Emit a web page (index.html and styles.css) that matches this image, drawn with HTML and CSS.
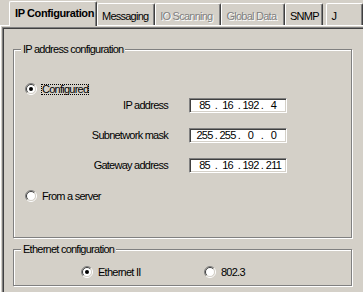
FILE: index.html
```html
<!DOCTYPE html>
<html>
<head>
    <title>IP Configuration</title>
    <meta charset="UTF-8">
    <link rel="stylesheet" href="styles.css">
</head>
<body>
    <!-- Tab strip -->
    <div class="tabs">
        <div class="tab tab-active">IP Configuration</div>
        <div class="tab tab-msg">Messaging</div>
        <div class="tab tab-io disabled">IO Scanning</div>
        <div class="tab tab-gd disabled">Global Data</div>
        <div class="tab tab-snmp">SNMP</div>
        <div class="tab tab-more">J</div>
    </div>

    <!-- Tab page -->
    <div class="page">
        <div class="frame">
            <div class="group group-ip">
                <span class="legend">IP address configuration</span>
                <div class="radio-row first-row">
                    <svg class="radio" viewBox="0 0 12 12">
                        <circle cx="6" cy="6" r="4.5" fill="#fff"/>
                        <path d="M2.1 9.9A5.5 5.5 0 0 1 9.9 2.1" fill="none" stroke="#808080"/>
                        <path d="M9.9 2.1A5.5 5.5 0 0 1 2.1 9.9" fill="none" stroke="#fff"/>
                        <path d="M2.8 9.2A4.5 4.5 0 0 1 9.2 2.8" fill="none" stroke="#404040"/>
                        <path d="M9.2 2.8A4.5 4.5 0 0 1 2.8 9.2" fill="none" stroke="#d4d0c8"/>
                        <circle cx="6" cy="6" r="2" fill="#000"/>
                    </svg>
                    <span class="radio-label focused">Configured</span>
                </div>
                <div class="fields">
                    <label class="field-label">IP address</label>
                    <div class="ip-box">
                        <span class="seg">85</span><span class="dot">.</span><span class="seg">16</span><span class="dot">.</span><span class="seg">192</span><span class="dot">.</span><span class="seg">4</span>
                    </div>
                    <label class="field-label">Subnetwork mask</label>
                    <div class="ip-box">
                        <span class="seg">255</span><span class="dot">.</span><span class="seg">255</span><span class="dot">.</span><span class="seg">0</span><span class="dot">.</span><span class="seg">0</span>
                    </div>
                    <label class="field-label">Gateway address</label>
                    <div class="ip-box">
                        <span class="seg">85</span><span class="dot">.</span><span class="seg">16</span><span class="dot">.</span><span class="seg">192</span><span class="dot">.</span><span class="seg">211</span>
                    </div>
                </div>
                <div class="radio-row server-row">
                    <svg class="radio" viewBox="0 0 12 12">
                        <circle cx="6" cy="6" r="4.5" fill="#fff"/>
                        <path d="M2.1 9.9A5.5 5.5 0 0 1 9.9 2.1" fill="none" stroke="#808080"/>
                        <path d="M9.9 2.1A5.5 5.5 0 0 1 2.1 9.9" fill="none" stroke="#fff"/>
                        <path d="M2.8 9.2A4.5 4.5 0 0 1 9.2 2.8" fill="none" stroke="#404040"/>
                        <path d="M9.2 2.8A4.5 4.5 0 0 1 2.8 9.2" fill="none" stroke="#d4d0c8"/>
                    </svg>
                    <span class="radio-label">From a server</span>
                </div>
            </div>

            <div class="group group-eth">
                <span class="legend">Ethernet configuration</span>
                <div class="eth-options">
                    <div class="radio-row opt-eth2">
                        <svg class="radio" viewBox="0 0 12 12">
                            <circle cx="6" cy="6" r="4.5" fill="#fff"/>
                            <path d="M2.1 9.9A5.5 5.5 0 0 1 9.9 2.1" fill="none" stroke="#808080"/>
                            <path d="M9.9 2.1A5.5 5.5 0 0 1 2.1 9.9" fill="none" stroke="#fff"/>
                            <path d="M2.8 9.2A4.5 4.5 0 0 1 9.2 2.8" fill="none" stroke="#404040"/>
                            <path d="M9.2 2.8A4.5 4.5 0 0 1 2.8 9.2" fill="none" stroke="#d4d0c8"/>
                            <circle cx="6" cy="6" r="2" fill="#000"/>
                        </svg>
                        <span class="radio-label">Ethernet II</span>
                    </div>
                    <div class="radio-row">
                        <svg class="radio" viewBox="0 0 12 12">
                            <circle cx="6" cy="6" r="4.5" fill="#fff"/>
                            <path d="M2.1 9.9A5.5 5.5 0 0 1 9.9 2.1" fill="none" stroke="#808080"/>
                            <path d="M9.9 2.1A5.5 5.5 0 0 1 2.1 9.9" fill="none" stroke="#fff"/>
                            <path d="M2.8 9.2A4.5 4.5 0 0 1 9.2 2.8" fill="none" stroke="#404040"/>
                            <path d="M9.2 2.8A4.5 4.5 0 0 1 2.8 9.2" fill="none" stroke="#d4d0c8"/>
                        </svg>
                        <span class="radio-label">802.3</span>
                    </div>
                </div>
            </div>
        </div>
    </div>
</body>
</html>
```

FILE: styles.css
```css
body {
    margin: 0;
    width: 363px;
    height: 292px;
    overflow: hidden;
    background: #d4d0c8;
    color: #000;
    font-family: "Liberation Sans", Arial, sans-serif;
    font-size: 11px;
    line-height: 13px;
    letter-spacing: -0.75px;
}
/* Tab strip */
.tabs {
    display: flex;
    align-items: flex-end;
    height: 25px;
    padding-left: 9px;
}
.tab {
    box-sizing: border-box;
    height: 22px;
    padding: 6px 0 0 4px;
    border-top: 1px solid #fff;
    border-left: 1px solid #fff;
    border-right: 1px solid #404040;
    border-radius: 2px 2px 0 0;
    box-shadow: inset -1px 0 #808080;
    white-space: nowrap;
    overflow: hidden;
}
.tab-active {
    position: relative;
    z-index: 1;
    width: 97px;
    height: 25px;
    margin-bottom: -1px;
    padding: 5px 0 0 5px;
    background: #d4d0c8;
    font-weight: bold;
    letter-spacing: -0.4px;
}
.tab-msg { width: 64px; }
.tab-io { width: 73px; }
.tab-gd { width: 70px; }
.tab-snmp { width: 42px; }
.tab-more {
    width: 40px;
    margin-left: 3px;
}
.disabled {
    color: #808080;
    text-shadow: 1px 1px 0 #fff;
}
/* Tab page */
.page {
    height: 265px;
    padding: 1px 0 0 1px;
    border-top: 1px solid #fff;
    border-left: 1px solid #fff;
    overflow: hidden;
}
.frame {
    height: 243px;
    padding: 21px 0 0 10px;
    border-top: 1px solid #808080;
    border-left: 1px solid #808080;
    box-shadow: inset 1px 1px #404040;
}
/* Group boxes */
.group {
    position: relative;
    box-sizing: border-box;
    width: 339px;
    border: 1px solid #808080;
    box-shadow: inset 1px 1px #fff, 1px 1px #fff;
}
.group-ip { height: 189px; }
.group-eth {
    height: 37px;
    margin-top: 11px;
}
.legend {
    position: absolute;
    top: -7px;
    left: 7px;
    padding: 0 2px;
    background: #d4d0c8;
    white-space: nowrap;
}
/* Radio buttons */
.radio-row {
    display: flex;
    align-items: center;
    height: 16px;
}
.group-ip .radio-row { padding-left: 11px; }
.first-row { margin-top: 31px; }
.server-row { margin-top: 15px; }
.radio {
    flex: none;
    width: 12px;
    height: 12px;
}
.radio-label {
    margin-left: 4px;
    border: 1px solid transparent;
    line-height: 9px;
    white-space: nowrap;
}
.focused { border: 1px dotted #000; }
.eth-options {
    display: flex;
    padding: 14px 0 0 67px;
}
.opt-eth2 { width: 123px; }
/* Address fields */
.fields {
    display: grid;
    grid-template-columns: 154px 98px;
    grid-auto-rows: 15px;
    column-gap: 21px;
    row-gap: 15px;
    align-items: center;
    margin-top: 1px;
}
.field-label { text-align: right; }
.ip-box {
    box-sizing: border-box;
    display: flex;
    height: 15px;
    padding-left: 5px;
    background: #fff;
    border-top: 1px solid #808080;
    border-left: 1px solid #808080;
    border-bottom: 1px solid #fff;
    border-right: 1px solid #fff;
    box-shadow: inset 1px 1px #404040, inset -1px -1px #d4d0c8;
}
.seg {
    width: 19px;
    text-align: center;
}
.dot {
    width: 4px;
    text-align: center;
}
```
